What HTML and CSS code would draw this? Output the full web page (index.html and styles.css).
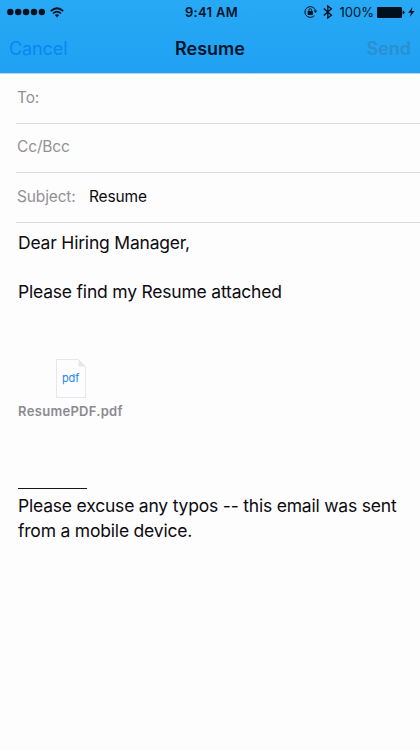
FILE: index.html
```
<!DOCTYPE html>
<html lang="en">
  <head>
    <meta charset="utf-8">
    <title>Resume</title>
    <link rel="stylesheet" href="styles.css">
  </head>
  <body>
    <div class="header">
      <div class="statusBar">
        <div class="statusLeft">
          <svg class="signal" width="38" height="8" viewBox="0 0 38 8">
            <circle cx="3.3" cy="4" r="3.2"/>
            <circle cx="11.2" cy="4" r="3.2"/>
            <circle cx="19.1" cy="4" r="3.2"/>
            <circle cx="27" cy="4" r="3.2"/>
            <circle cx="34.9" cy="4" r="3.2"/>
          </svg>
          <svg class="wifi" width="14" height="11" viewBox="0 0 14 11">
            <path d="M0.8 4.1 Q7 -1.6 13.2 4.1" fill="none" stroke="#00101d" stroke-width="1.7"/>
            <path d="M3 6.5 Q7 2.8 11 6.5" fill="none" stroke="#00101d" stroke-width="1.6"/>
            <path d="M4.9 8.1 Q7 6.2 9.1 8.1 L7 10.4 Z"/>
          </svg>
        </div>
        <span class="time">9:41 AM</span>
        <div class="statusRight">
          <svg class="lock" width="14" height="12" viewBox="0 0 14 12">
            <path d="M11.5 4.4 A5.4 5.4 0 1 0 10.3 9.7" fill="none" stroke="#00101d" stroke-width="1"/>
            <path d="M9.6 4.6 H13.2 L11.5 7 Z"/>
            <rect x="3.7" y="5" width="5.2" height="3.9" rx="0.4"/>
            <path d="M4.9 5.4 V4.2 A1.4 1.4 0 0 1 7.7 4.2 V5.4" fill="none" stroke="#00101d" stroke-width="1"/>
          </svg>
          <svg class="bluetooth" width="10" height="14" viewBox="0 0 10 14">
            <path d="M0.8 3.6 L8.4 10.2 L4.8 13 V1 L8.4 3.8 L0.8 10.4" fill="none" stroke="#00101d" stroke-width="1.3"/>
          </svg>
          <span class="percent">100%</span>
          <svg class="battery" width="28" height="11" viewBox="0 0 28 11">
            <rect x="0" y="0" width="25" height="11" rx="1"/>
            <path d="M25.6 3.5 Q27.6 3.8 27.6 5.5 Q27.6 7.2 25.6 7.5 Z"/>
          </svg>
          <svg class="bolt" width="7" height="10" viewBox="0 0 7 10">
            <path d="M4.5 0 L0.2 5.7 H3 L1.8 10 L6.6 4.1 H3.6 Z"/>
          </svg>
        </div>
      </div>
      <div class="navBar">
        <span class="cancel">Cancel</span>
        <span class="title">Resume</span>
        <span class="send">Send</span>
      </div>
    </div>
    <div class="fields">
      <div class="row"><span class="label">To:</span></div>
      <div class="row"><span class="label">Cc/Bcc</span></div>
      <div class="row">
        <span class="label subject">Subject:</span>
        <span class="value">Resume</span>
      </div>
    </div>
    <div class="message">
      <p class="greeting">Dear Hiring Manager,</p>
      <p class="text">Please find my Resume attached</p>
      <div class="attachment">
        <div class="file">
          <svg class="page" width="30" height="39" viewBox="0 0 30 39">
            <path d="M0.5 0.5 H22.5 L29.5 7.5 V38.5 H0.5 Z" fill="#fdfcff" stroke="#e8e6eb"/>
            <path d="M22.5 0.5 V7.5 H29.5 Z" fill="#e8e6eb"/>
          </svg>
          <span class="fileType">pdf</span>
        </div>
        <span class="fileName">ResumePDF.pdf</span>
      </div>
      <div class="rule"></div>
      <p class="signature">Please excuse any typos -- this email was sent<br>from a mobile device.</p>
    </div>
  </body>
</html>
```

FILE: styles.css
```
body {
  margin: 0;
  height: 750px;
  overflow: hidden;
  background: #fefdfe;
  color: #0c0b10;
  font-family: Inter, "Liberation Sans", sans-serif;
}

p {
  margin: 0;
}

svg {
  display: block;
  fill: #00101d;
}

.header {
  height: 74px;
  box-sizing: border-box;
  background: linear-gradient(#27a9f5, #20a1f3);
  border-bottom: 1px solid #b4d8ee;
  color: #00142a;
}

.statusBar {
  display: grid;
  grid-template-columns: 1fr auto 1fr;
  align-items: center;
  height: 24px;
  padding: 0 6px 0 7px;
}

.statusLeft,
.statusRight {
  display: flex;
  align-items: center;
}

.statusRight {
  justify-content: flex-end;
}

.wifi {
  margin-left: 5px;
}

.time {
  padding-left: 2px;
  font-size: 13px;
  font-weight: 600;
  letter-spacing: 0.3px;
}

.lock {
  margin-right: -1px;
}

.bluetooth {
  margin-left: 6px;
}

.percent {
  margin-left: 7px;
  font-size: 13px;
}

.battery {
  margin-left: 3px;
}

.bolt {
  margin-left: 3px;
  margin-right: -1px;
}

.navBar {
  display: grid;
  grid-template-columns: 1fr auto 1fr;
  align-items: center;
  height: 48px;
  padding: 0 9px 0 9px;
  font-size: 18px;
}

.cancel {
  letter-spacing: -0.1px;
  color: #0787f6;
}

.title {
  font-weight: 600;
}

.send {
  color: #2b8fd0;
  font-weight: 600;
  text-align: right;
}

.fields {
  padding-left: 16px;
}

.row {
  display: flex;
  align-items: center;
  box-sizing: border-box;
  height: 49.5px;
  padding: 0 0 2px 1px;
  border-bottom: 1px solid #dcdadf;
  font-size: 15.5px;
  letter-spacing: -0.15px;
}

.label {
  color: #929196;
}

.subject {
  width: 72px;
}

.message {
  padding: 8px 18px 0;
  font-size: 17.5px;
  letter-spacing: -0.2px;
  line-height: 24.8px;
}

.text {
  margin-top: 24.8px;
}

.attachment {
  display: flex;
  flex-direction: column;
  align-items: center;
  width: 105px;
  margin-top: 54px;
}

.file {
  display: grid;
  place-items: center;
}

.page,
.fileType {
  grid-area: 1 / 1;
}

.fileType {
  color: #1c86ee;
  font-size: 11px;
  letter-spacing: -0.1px;
  line-height: 14px;
}

.fileName {
  margin-top: 4px;
  color: #8b8a8f;
  font-size: 13px;
  font-weight: 600;
  letter-spacing: 0.3px;
  line-height: 18px;
}

.rule {
  width: 69px;
  height: 1px;
  margin-top: 68px;
  background: #17161b;
}

.signature {
  margin-top: 5px;
  white-space: nowrap;
}
```
